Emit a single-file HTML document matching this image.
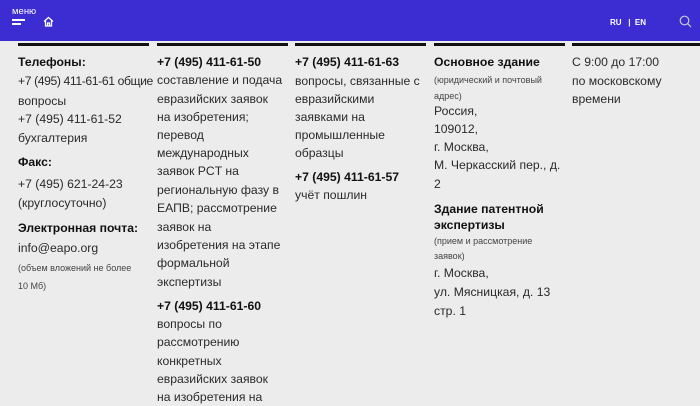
<!DOCTYPE html>
<html><head><meta charset="utf-8"><style>
*{margin:0;padding:0;box-sizing:border-box}
body{width:700px;height:405px;overflow:hidden;background:#ececec;font-family:"Liberation Sans","DejaVu Sans",sans-serif;color:#222;position:relative}
.hd{position:absolute;left:0;top:0;width:700px;height:41px;background:#3b2dd2}
.bar{position:absolute;top:43px;height:3px;background:#111;width:131px}
.l{position:absolute;font-size:12.2px;line-height:18px;white-space:nowrap;color:#2a2a2a}
.b{font-weight:bold;color:#111}
.s{font-size:9px;color:#444}
</style></head><body>
<div class="hd">
<div style="position:absolute;left:12px;top:6px;color:#fff;font-size:9.5px">меню</div>
<div style="position:absolute;left:12px;top:19px;width:13px;height:2px;background:#fff"></div>
<div style="position:absolute;left:12px;top:23px;width:9px;height:2px;background:#fff"></div>
<svg style="position:absolute;left:43px;top:16px" width="11" height="11" viewBox="0 0 11 11" fill="none" stroke="#fff" stroke-width="1.3"><path d="M1 5.5L5.5 1.5 10 5.5M2.5 4.5V10H8.5V4.5M4.5 10V7H6.5V10"/></svg>
<div style="position:absolute;left:610px;top:18px;color:#fff;font-size:8px;font-weight:bold">RU &nbsp; | &nbsp;EN</div>
<svg style="position:absolute;left:679px;top:15px" width="13" height="13" viewBox="0 0 13 13" fill="none" stroke="#ccc" stroke-width="1.2"><circle cx="5.5" cy="5.5" r="4.3"/><path d="M8.6 8.6L12 12"/></svg>
</div>
<div class="bar" style="left:18px"></div><div class="bar" style="left:157px"></div><div class="bar" style="left:295px"></div><div class="bar" style="left:434px"></div><div class="bar" style="left:572px;width:128px"></div>

<div class="l b" style="left:18px;top:53px">Телефоны:</div>
<div class="l" style="left:18px;top:72px;letter-spacing:-0.4px">+7 (495) 411-61-61 общие</div>
<div class="l" style="left:18px;top:92px">вопросы</div>
<div class="l" style="left:18px;top:110px">+7 (495) 411-61-52</div>
<div class="l" style="left:18px;top:129px">бухгалтерия</div>
<div class="l b" style="left:18px;top:153px">Факс:</div>
<div class="l" style="left:18px;top:175px">+7 (495) 621-24-23</div>
<div class="l" style="left:18px;top:194px">(круглосуточно)</div>
<div class="l b" style="left:18px;top:219px">Электронная почта:</div>
<div class="l" style="left:18px;top:239px">info@eapo.org</div>
<div class="l s" style="left:18px;top:259px">(объем вложений не более</div>
<div class="l s" style="left:18px;top:277px">10 Мб)</div>

<div class="l b" style="left:157px;top:53px">+7 (495) 411-61-50</div>
<div class="l" style="left:157px;top:71px">составление и подача</div>
<div class="l" style="left:157px;top:90px">евразийских заявок</div>
<div class="l" style="left:157px;top:108px">на изобретения;</div>
<div class="l" style="left:157px;top:126px">перевод</div>
<div class="l" style="left:157px;top:144px">международных</div>
<div class="l" style="left:157px;top:162px">заявок PCT на</div>
<div class="l" style="left:157px;top:181px">региональную фазу в</div>
<div class="l" style="left:157px;top:199px">ЕАПВ; рассмотрение</div>
<div class="l" style="left:157px;top:218px">заявок на</div>
<div class="l" style="left:157px;top:236px">изобретения на этапе</div>
<div class="l" style="left:157px;top:254px">формальной</div>
<div class="l" style="left:157px;top:273px">экспертизы</div>
<div class="l b" style="left:157px;top:297px">+7 (495) 411-61-60</div>
<div class="l" style="left:157px;top:315px">вопросы по</div>
<div class="l" style="left:157px;top:333px">рассмотрению</div>
<div class="l" style="left:157px;top:352px">конкретных</div>
<div class="l" style="left:157px;top:370px">евразийских заявок</div>
<div class="l" style="left:157px;top:388px">на изобретения на</div>

<div class="l b" style="left:295px;top:53px">+7 (495) 411-61-63</div>
<div class="l" style="left:295px;top:72px">вопросы, связанные с</div>
<div class="l" style="left:295px;top:90px">евразийскими</div>
<div class="l" style="left:295px;top:108px">заявками на</div>
<div class="l" style="left:295px;top:126px">промышленные</div>
<div class="l" style="left:295px;top:144px">образцы</div>
<div class="l b" style="left:295px;top:168px">+7 (495) 411-61-57</div>
<div class="l" style="left:295px;top:186px">учёт пошлин</div>

<div class="l b" style="left:434px;top:53px">Основное здание</div>
<div class="l s" style="left:434px;top:71px">(юридический и почтовый</div>
<div class="l s" style="left:434px;top:87px">адрес)</div>
<div class="l" style="left:434px;top:102px">Россия,</div>
<div class="l" style="left:434px;top:120px">109012,</div>
<div class="l" style="left:434px;top:138px">г. Москва,</div>
<div class="l" style="left:434px;top:156px">М. Черкасский пер., д.</div>
<div class="l" style="left:434px;top:175px">2</div>
<div class="l b" style="left:434px;top:200px">Здание патентной</div>
<div class="l b" style="left:434px;top:216px">экспертизы</div>
<div class="l s" style="left:434px;top:232px">(прием и рассмотрение</div>
<div class="l s" style="left:434px;top:247px">заявок)</div>
<div class="l" style="left:434px;top:264px">г. Москва,</div>
<div class="l" style="left:434px;top:283px">ул. Мясницкая, д. 13</div>
<div class="l" style="left:434px;top:302px">стр. 1</div>

<div class="l" style="left:572px;top:53px">С 9:00 до 17:00</div>
<div class="l" style="left:572px;top:72px">по московскому</div>
<div class="l" style="left:572px;top:90px">времени</div>
</body></html>
